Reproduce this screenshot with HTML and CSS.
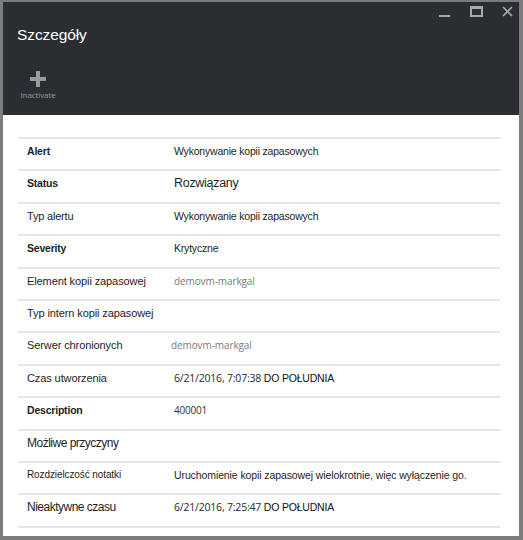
FILE: index.html
```html
<!DOCTYPE html>
<html lang="pl">
<head>
<meta charset="utf-8">
<title>Szczegóły</title>
<link rel="stylesheet" href="styles.css">
</head>
<body>
<div class="window">
  <header class="blade-header">
    <div class="controls">
      <span class="ctl ctl-min"></span>
      <span class="ctl ctl-max"></span>
      <svg class="ctl ctl-close" width="11" height="11" viewBox="0 0 11 11"><path d="M1 1 L10 10 M10 1 L1 10" stroke="#a8a8a8" stroke-width="1.6" fill="none"/></svg>
    </div>
    <h1 class="title">Szczegóły</h1>
    <div class="commands">
      <div class="cmd">
        <svg class="cmd-icon" width="16" height="16" viewBox="0 0 16 16"><path d="M6 0h4v6h6v4h-6v6h-4v-6h-6v-4h6z" fill="#9b9b9b"/></svg>
        <span class="cmd-label">Inactivate</span>
      </div>
    </div>
  </header>
  <main class="content">
    <div class="props">
      <div class="row"><span class="label bold">Alert</span><span class="value">Wykonywanie kopii zapasowych</span></div>
      <div class="row"><span class="label bold">Status</span><span class="value big">Rozwiązany</span></div>
      <div class="row"><span class="label">Typ alertu</span><span class="value">Wykonywanie kopii zapasowych</span></div>
      <div class="row"><span class="label bold">Severity</span><span class="value">Krytyczne</span></div>
      <div class="row"><span class="label sm">Element kopii zapasowej</span><span class="value gray">demovm-markgal</span></div>
      <div class="row"><span class="label sm">Typ intern kopii zapasowej</span><span class="value"></span></div>
      <div class="row"><span class="label sm">Serwer chronionych</span><span class="value gray shift">demovm-markgal</span></div>
      <div class="row"><span class="label sm">Czas utworzenia</span><span class="value"><span class="date">6/21/2016, 7:07:38</span> <span class="ampm">DO POŁUDNIA</span></span></div>
      <div class="row"><span class="label bold">Description</span><span class="value os">400001</span></div>
      <div class="row"><span class="label med">Możliwe przyczyny</span><span class="value"></span></div>
      <div class="row"><span class="label xs">Rozdzielczość notatki</span><span class="value long">Uruchomienie kopii zapasowej wielokrotnie, więc wyłączenie go.</span></div>
      <div class="row"><span class="label med">Nieaktywne czasu</span><span class="value"><span class="date">6/21/2016, 7:25:47</span> <span class="ampm">DO POŁUDNIA</span></span></div>
    </div>
  </main>
</div>
</body>
</html>
```

FILE: styles.css
```css
* { box-sizing: border-box; }
html, body { margin: 0; padding: 0; }
body {
  width: 523px;
  height: 540px;
  background: #ffffff;
  font-family: "Liberation Sans", Arial, sans-serif;
  overflow: hidden;
}
.window {
  width: 523px;
  height: 540px;
  border-style: solid;
  border-color: #7c7c7c;
  border-width: 2px 4px 4px 3px;
  display: flex;
  flex-direction: column;
  background: #ffffff;
}
.blade-header {
  height: 113px;
  background: #2a2e32;
  padding: 0 0 0 14px;
  display: flex;
  flex-direction: column;
}
.controls {
  display: flex;
  justify-content: flex-end;
  align-items: flex-start;
  height: 16px;
  padding-top: 4px;
  padding-right: 6px;
}
.ctl { display: block; }
.ctl-min {
  width: 11px;
  height: 2px;
  background: #a8a8a8;
  margin-top: 9px;
  margin-right: 20px;
}
.ctl-max {
  width: 13px;
  height: 11px;
  border: 2px solid #a8a8a8;
  border-top-width: 3px;
  margin-right: 19px;
}
.title {
  margin: 7px 0 0 0;
  font-weight: normal;
  font-size: 15.5px;
  line-height: 20px;
  color: #ffffff;
  letter-spacing: -0.1px;
}
.commands {
  display: flex;
  margin-top: 26px;
}
.cmd {
  display: flex;
  flex-direction: column;
  align-items: center;
  width: 42px;
}
.cmd-icon { display: block; }
.cmd-label {
  font-family: "Open Sans", "Liberation Sans", sans-serif;
  font-size: 8px;
  line-height: 12px;
  margin-top: 2px;
  color: #9a9a9a;
  letter-spacing: -0.1px;
}
.content {
  flex: 1;
  padding: 22px 19px 0 15px;
}
.props {
  border-top: 2px solid #e6e6e6;
}
.row {
  height: 32.4px;
  border-bottom: 2px solid #e6e6e6;
  display: flex;
  align-items: flex-start;
  padding-top: 4px;
  padding-left: 9px;
  color: #1e1e1e;
}
.label {
  width: 147px;
  flex: none;
  font-size: 11px;
  line-height: 16px;
  letter-spacing: -0.2px;
}
.label.bold { font-weight: bold; font-size: 10.5px; }
.label.sm { font-size: 11px; letter-spacing: -0.1px; }
.label.xs { font-size: 10px; letter-spacing: -0.1px; }
.label.med { font-size: 12px; letter-spacing: -0.5px; }
.value {
  font-size: 10.5px;
  line-height: 16px;
  letter-spacing: -0.2px;
  color: #1e1e1e;
}
.value.long { letter-spacing: -0.1px; }
.value.big { font-size: 12.5px; letter-spacing: -0.3px; }
.value.gray {
  font-family: "Open Sans", "Liberation Sans", sans-serif;
  color: #7a7a7a;
  font-size: 10px;
  letter-spacing: -0.1px;
}
.value.shift { margin-left: -3px; }
.value.os {
  font-family: "Open Sans", "Liberation Sans", sans-serif;
  font-size: 10px;
  color: #333333;
}
.date {
  font-family: "Open Sans", "Liberation Sans", sans-serif;
  font-size: 10.5px;
  color: #2a2a2a;
  letter-spacing: -0.2px;
}
.ampm {
  font-size: 10.5px;
  color: #111111;
}
```
